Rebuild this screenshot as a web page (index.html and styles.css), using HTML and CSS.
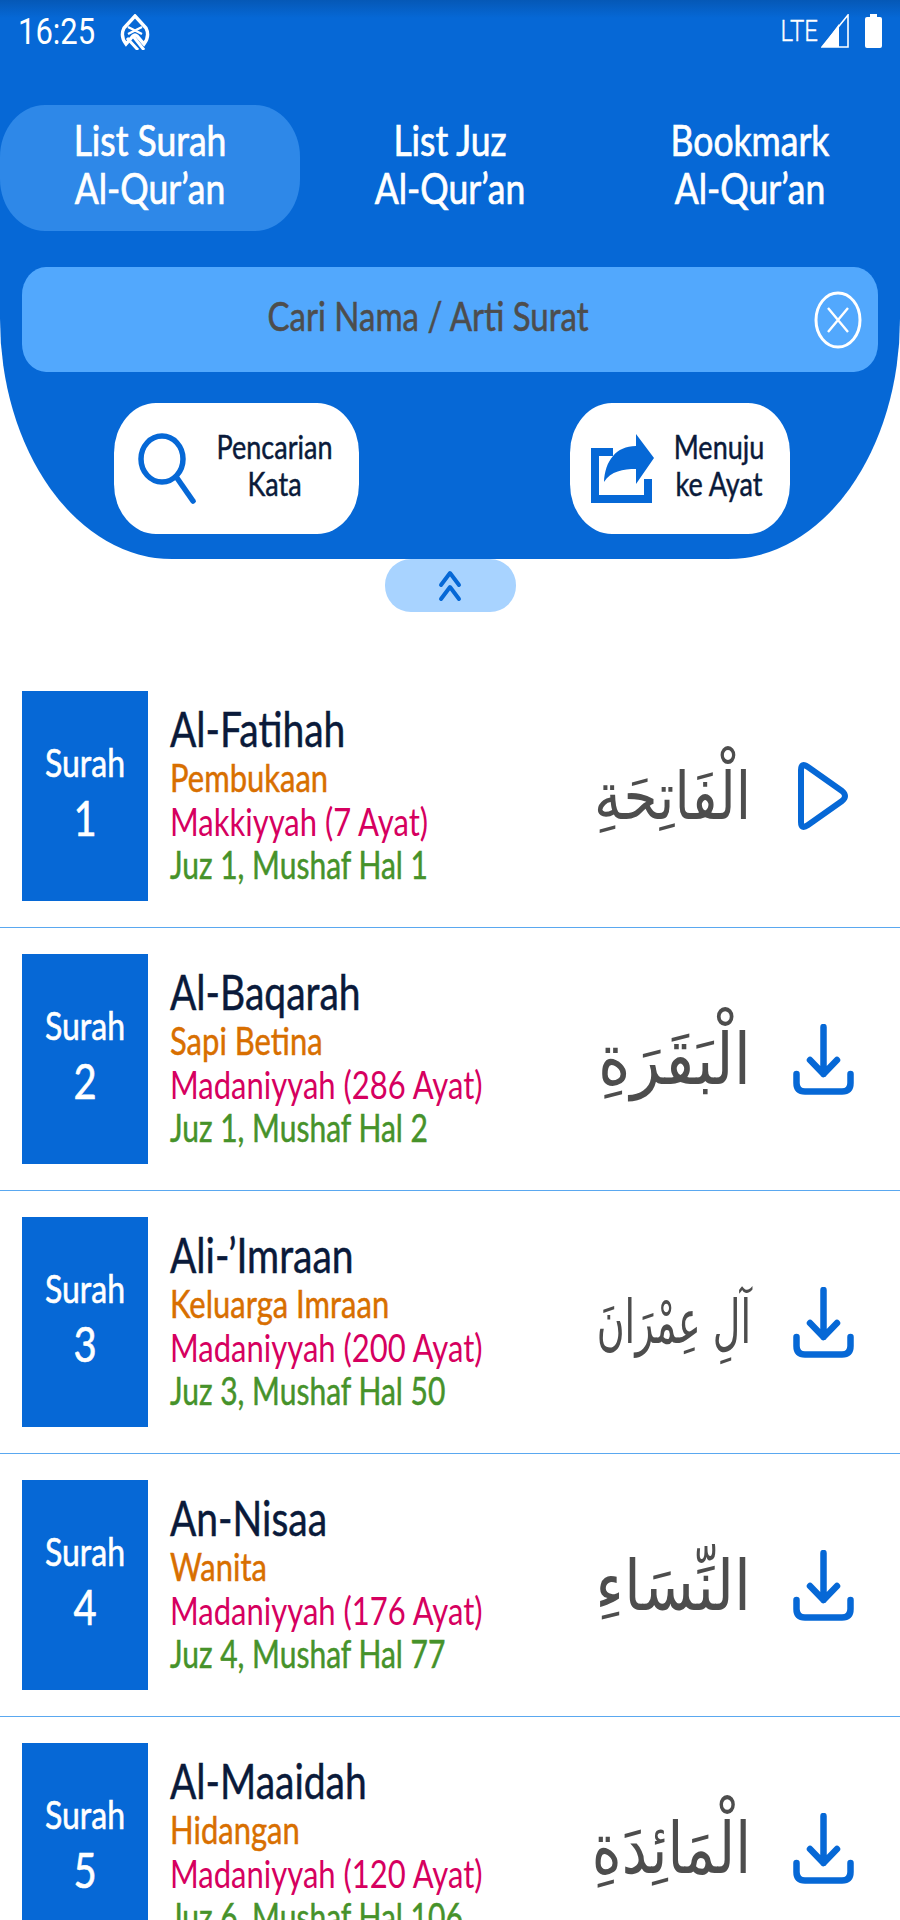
FILE: index.html
```html
<!DOCTYPE html>
<html lang="id">
<head>
<meta charset="utf-8">
<title>List Surah Al-Qur'an</title>
<link rel="stylesheet" href="styles.css">
</head>
<body>
<header class="panel">
  <div class="status">
    <span class="time">16:25</span>
    <svg class="logo" width="30" height="36" viewBox="0 0 30 36"><path d="M15 2 L26 14 Q30 22 24 30 L17 22 Q15 20 13 22 L6 30 Q0 22 4 14 Z" fill="none" stroke="#fff" stroke-width="3.4"/><path d="M8 13 L22 20 M22 13 L8 20" stroke="#fff" stroke-width="2.4"/><path d="M7 24 L18 36 M13 22 L24 36" stroke="#fff" stroke-width="3"/></svg>
    <span class="lte">LTE</span>
    <svg class="signal" width="28" height="34" viewBox="0 0 28 34"><path d="M27 1 V33 H1 Z" fill="none" stroke="#fff" stroke-width="1.6"/><path d="M18 10 V33 H1 Z" fill="#fff"/></svg>
    <svg class="battery" width="17" height="34" viewBox="0 0 17 34"><path d="M5 0 H12 V3 H15 Q17 3 17 5 V32 Q17 34 15 34 H2 Q0 34 0 32 V5 Q0 3 2 3 H5 Z" fill="#fff"/></svg>
  </div>
  <nav class="tabs">
    <div class="tab active"><span class="tall">List Surah</span><span class="tall">Al-Qur’an</span></div>
    <div class="tab"><span class="tall">List Juz</span><span class="tall">Al-Qur’an</span></div>
    <div class="tab"><span class="tall">Bookmark</span><span class="tall">Al-Qur’an</span></div>
  </nav>
  <div class="search">
    <span class="placeholder">Cari Nama / Arti Surat</span>
    <svg class="clear" width="48" height="58" viewBox="0 0 48 58"><ellipse cx="24" cy="29" rx="22" ry="27" fill="none" stroke="#fff" stroke-width="3"/><path d="M14 17 L34 41 M34 17 L14 41" stroke="#fff" stroke-width="2.4"/></svg>
  </div>
  <div class="actions">
    <div class="action action-find">
      <svg width="58" height="71" viewBox="0 0 58 71"><ellipse cx="24" cy="26" rx="21" ry="23" fill="none" stroke="#0668d6" stroke-width="5.5"/><path d="M39 45 L55 68" stroke="#0668d6" stroke-width="5.5" stroke-linecap="round"/></svg>
      <div class="action-label find-label"><span class="tall">Pencarian</span><span class="tall">Kata</span></div>
    </div>
    <div class="action action-goto">
      <svg width="63" height="71" viewBox="0 0 63 71"><path d="M0 19 H22 M4 16 V66 H57 V46" fill="none" stroke="#0668d6" stroke-width="8"/><path d="M45 1 L63 25 L45 51 V36 C32 36 20 38 13 49 C14 28 25 13 45 13 Z" fill="#0668d6"/></svg>
      <div class="action-label goto-label"><span class="tall">Menuju</span><span class="tall">ke Ayat</span></div>
    </div>
  </div>
</header>
<div class="toggle">
  <svg width="24" height="32" viewBox="0 0 24 32"><path d="M3 15 L12 3 L21 15 M3 29 L12 17 L21 29" fill="none" stroke="#0668d6" stroke-width="4" stroke-linecap="round" stroke-linejoin="round"/></svg>
</div>
<main class="list">
  <article class="row">
    <div class="badge"><span class="badge-word">Surah</span><span class="badge-num">1</span></div>
    <div class="info"><div class="name">Al-Fatihah</div><div class="meaning">Pembukaan</div><div class="origin">Makkiyyah (7 Ayat)</div><div class="juz">Juz 1, Mushaf Hal 1</div></div>
    <div class="arabic ar-fatihah" lang="ar" dir="rtl">الْفَاتِحَةِ</div>
    <div class="act"><svg width="52" height="70" viewBox="0 0 52 70"><path d="M4 9 Q4 1 11 6 L45 30 Q51 35 45 40 L11 64 Q4 69 4 61 Z" fill="none" stroke="#0668d6" stroke-width="6" stroke-linejoin="round"/></svg></div>
  </article>
  <article class="row">
    <div class="badge"><span class="badge-word">Surah</span><span class="badge-num">2</span></div>
    <div class="info"><div class="name">Al-Baqarah</div><div class="meaning">Sapi Betina</div><div class="origin">Madaniyyah (286 Ayat)</div><div class="juz">Juz 1, Mushaf Hal 2</div></div>
    <div class="arabic ar-baqarah" lang="ar" dir="rtl">الْبَقَرَةِ</div>
    <div class="act"><svg width="61" height="71" viewBox="0 0 61 71"><path d="M30.5 3 V50 M17 36 L30.5 50 L44 36 M3.5 50 V59 Q3.5 67.500 12 67.500 H49 Q57.500 67.500 57.500 59 V50" fill="none" stroke="#0668d6" stroke-width="6.500" stroke-linecap="round" stroke-linejoin="round"/></svg></div>
  </article>
  <article class="row">
    <div class="badge"><span class="badge-word">Surah</span><span class="badge-num">3</span></div>
    <div class="info"><div class="name">Ali-’Imraan</div><div class="meaning">Keluarga Imraan</div><div class="origin">Madaniyyah (200 Ayat)</div><div class="juz">Juz 3, Mushaf Hal 50</div></div>
    <div class="arabic ar-imran" lang="ar" dir="rtl">آلِ عِمْرَانَ</div>
    <div class="act"><svg width="61" height="71" viewBox="0 0 61 71"><path d="M30.5 3 V50 M17 36 L30.5 50 L44 36 M3.5 50 V59 Q3.5 67.500 12 67.500 H49 Q57.500 67.500 57.500 59 V50" fill="none" stroke="#0668d6" stroke-width="6.500" stroke-linecap="round" stroke-linejoin="round"/></svg></div>
  </article>
  <article class="row">
    <div class="badge"><span class="badge-word">Surah</span><span class="badge-num">4</span></div>
    <div class="info"><div class="name">An-Nisaa</div><div class="meaning">Wanita</div><div class="origin">Madaniyyah (176 Ayat)</div><div class="juz">Juz 4, Mushaf Hal 77</div></div>
    <div class="arabic ar-nisa" lang="ar" dir="rtl">النِّسَاءِ</div>
    <div class="act"><svg width="61" height="71" viewBox="0 0 61 71"><path d="M30.5 3 V50 M17 36 L30.5 50 L44 36 M3.5 50 V59 Q3.5 67.500 12 67.500 H49 Q57.500 67.500 57.500 59 V50" fill="none" stroke="#0668d6" stroke-width="6.500" stroke-linecap="round" stroke-linejoin="round"/></svg></div>
  </article>
  <article class="row">
    <div class="badge"><span class="badge-word">Surah</span><span class="badge-num">5</span></div>
    <div class="info"><div class="name">Al-Maaidah</div><div class="meaning">Hidangan</div><div class="origin">Madaniyyah (120 Ayat)</div><div class="juz">Juz 6, Mushaf Hal 106</div></div>
    <div class="arabic ar-maidah" lang="ar" dir="rtl">الْمَائِدَةِ</div>
    <div class="act"><svg width="61" height="71" viewBox="0 0 61 71"><path d="M30.5 3 V50 M17 36 L30.5 50 L44 36 M3.5 50 V59 Q3.5 67.500 12 67.500 H49 Q57.500 67.500 57.500 59 V50" fill="none" stroke="#0668d6" stroke-width="6.500" stroke-linecap="round" stroke-linejoin="round"/></svg></div>
  </article>
</main>
</body>
</html>
```
FILE: styles.css
```css
* { box-sizing: border-box; }
html, body { margin: 0; height: 1920px; overflow: hidden; background: #fff; }
body { font-family: Lato, "Noto Sans", sans-serif; }
svg { display: block; flex: none; }

.panel {
  height: 559px;
  background: linear-gradient(#0558b6 0, #0668d6 18px);
  border-radius: 0 0 172px 172px / 0 0 240px 240px;
}
.status { display: flex; align-items: center; height: 62px; padding: 0 18px; color: #fff; font-family: Roboto, sans-serif; }
.time { font-size: 31px; transform: scaleY(1.22); }
.logo { margin-left: 25px; margin-top: 2px; }
.lte { margin-left: auto; font-size: 24px; font-weight: 300; transform: scaleY(1.22); -webkit-text-stroke: 0.3px #fff; }
.signal { margin-left: 3px; }
.battery { margin-left: 16px; }

.tall { display: block; transform: scaleY(1.22); }
.tabs { display: grid; grid-template-columns: repeat(3, 300px); margin-top: 43px; }
.tab { height: 126px; padding-bottom: 8px; border-radius: 45px / 52px; display: flex; flex-direction: column; justify-content: center; text-align: center; color: #fff; font-size: 35.5px; line-height: 48px; -webkit-text-stroke: 0.6px #fff; }
.active { background: #2e88e8; }

.search { position: relative; display: flex; align-items: center; justify-content: center; height: 105px; margin: 36px 22px 0; padding: 0 44px 10px 0; background: #52a8fd; border-radius: 24px / 28px; }
.placeholder { font-size: 33px; color: #4d4d4d; transform: scaleY(1.22); -webkit-text-stroke: 0.5px #4d4d4d; }
.clear { position: absolute; right: 16px; top: 24px; }

.actions { display: flex; margin-top: 31px; padding-left: 114px; }
.action { display: flex; align-items: center; height: 131px; background: #fff; border-radius: 42px / 50px; }
.action-find { width: 245px; padding-left: 24px; }
.action-goto { width: 220px; margin-left: 211px; padding-left: 21px; }
.action-label { flex: 1; padding-bottom: 8px; text-align: center; font-size: 27px; line-height: 37px; color: #0a1a3a; -webkit-text-stroke: 0.4px #0a1a3a; }
.find-label { padding-left: 12px; padding-right: 18px; }
.goto-label { padding-right: 6px; }

.toggle { display: flex; align-items: center; justify-content: center; width: 131px; height: 53px; margin: 0 auto; background: #a8d3ff; border-radius: 26px; }

.list { margin-top: 53px; }
.row { display: flex; align-items: center; height: 263px; padding: 26px 46px 26px 22px; border-bottom: 1px solid #5aa8f0; }
.badge { width: 126px; height: 210px; padding-bottom: 10px; flex: none; background: #0668d6; color: #fff; display: flex; flex-direction: column; align-items: center; justify-content: center; -webkit-text-stroke: 0.5px #fff; }
.badge-word { font-size: 32px; line-height: 54px; transform: scaleY(1.22); }
.badge-num { font-size: 40px; line-height: 58px; transform: scaleY(1.22); }
.info { margin-left: 22px; width: 380px; flex: none; height: 210px; padding-top: 12px; }
.name, .meaning, .origin, .juz { white-space: nowrap; }
.name { font-size: 39px; line-height: 52px; color: #0a1a3a; transform: scaleY(1.22); -webkit-text-stroke: 0.4px #0a1a3a; }
.meaning { font-size: 31px; line-height: 44px; color: #d86f00; transform: scaleY(1.22); -webkit-text-stroke: 0.4px #d86f00; }
.origin { font-size: 31px; line-height: 45px; color: #d6005f; transform: scaleY(1.26); }
.juz { font-size: 30px; line-height: 38px; color: #46922a; transform: scaleY(1.3); -webkit-text-stroke: 0.4px #46922a; }
.arabic { margin-left: auto; width: 165px; font-family: "DejaVu Sans", sans-serif; color: #4d4d4d; text-align: right; white-space: nowrap; }
.ar-fatihah { font-size: 55px; transform: scaleY(1.2); }
.ar-baqarah { font-size: 62px; transform: scaleY(1.15); }
.ar-imran { font-size: 38px; transform: scaleY(1.6); }
.ar-nisa { font-size: 61px; transform: scaleY(1.15); }
.ar-maidah { font-size: 57px; transform: scaleY(1.25); }
.act { width: 62px; margin-left: 41px; flex: none; display: flex; justify-content: center; }
```
